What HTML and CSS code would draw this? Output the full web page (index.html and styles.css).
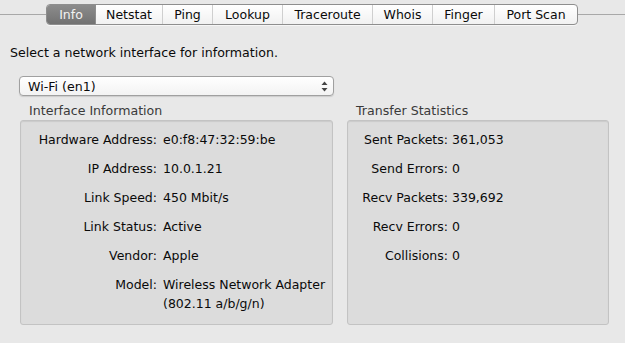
FILE: index.html
```html
<!DOCTYPE html>
<html lang="en">
<head>
    <meta charset="UTF-8">
    <title>Network Utility</title>
    <link rel="stylesheet" href="styles.css">
</head>
<body>
    <div class="tabbar">
        <div class="tabs">
            <span class="tab tab-info active">Info</span>
            <span class="tab tab-netstat">Netstat</span>
            <span class="tab tab-ping">Ping</span>
            <span class="tab tab-lookup">Lookup</span>
            <span class="tab tab-trace">Traceroute</span>
            <span class="tab tab-whois">Whois</span>
            <span class="tab tab-finger">Finger</span>
            <span class="tab tab-port">Port Scan</span>
        </div>
    </div>

    <p class="intro">Select a network interface for information.</p>

    <div class="popup">
        <span>Wi-Fi (en1)</span>
        <svg class="arrows" width="7" height="11" viewBox="0 0 7 11">
            <path d="M3.5 0.5 L6.5 4 L0.5 4 Z" fill="#444"/>
            <path d="M3.5 10.5 L6.5 7 L0.5 7 Z" fill="#444"/>
        </svg>
    </div>

    <div class="panels">
        <section class="group group-left">
            <h2 class="group-title">Interface Information</h2>
            <div class="box">
                <div class="rows">
                    <span class="label">Hardware Address:</span><span>e0:f8:47:32:59:be</span>
                    <span class="label">IP Address:</span><span>10.0.1.21</span>
                    <span class="label">Link Speed:</span><span>450 Mbit/s</span>
                    <span class="label">Link Status:</span><span>Active</span>
                    <span class="label">Vendor:</span><span>Apple</span>
                    <span class="label">Model:</span><span>Wireless Network Adapter<br>(802.11 a/b/g/n)</span>
                </div>
            </div>
        </section>

        <section class="group group-right">
            <h2 class="group-title">Transfer Statistics</h2>
            <div class="box">
                <div class="rows">
                    <span class="label">Sent Packets:</span><span>361,053</span>
                    <span class="label">Send Errors:</span><span>0</span>
                    <span class="label">Recv Packets:</span><span>339,692</span>
                    <span class="label">Recv Errors:</span><span>0</span>
                    <span class="label">Collisions:</span><span>0</span>
                </div>
            </div>
        </section>
    </div>
</body>
</html>
```

FILE: styles.css
```css
body {
    margin: 0;
    background-color: #e8e8e8;
    font-family: 'DejaVu Sans', 'Liberation Sans', sans-serif;
    font-size: 12.5px;
    color: #0a0a0a;
    width: 625px;
    height: 343px;
    overflow: hidden;
}

/* tab strip with the thin line running through it */
.tabbar {
    position: relative;
    height: 21px;
    padding-top: 4px;
    display: flex;
}

.tabbar::before {
    content: "";
    position: absolute;
    left: 0;
    right: 0;
    top: 14px;
    border-top: 1px solid #a8a8a8;
}

.tabs {
    position: relative;
    margin-left: 46px;
    display: flex;
    height: 19px;
    border: 1px solid #8e8e8e;
    border-radius: 4px;
    background: linear-gradient(#ffffff, #f1f1f1);
    overflow: hidden;
    box-shadow: 0 1px 0 rgba(255, 255, 255, 0.6);
}

.tab {
    display: flex;
    align-items: center;
    justify-content: center;
    font-size: 12.5px;
    color: #0a0a0a;
    border-left: 1px solid #cfcfcf;
}

.tab:first-child {
    border-left: none;
}

.tab.active {
    color: #f2f2f2;
    background: linear-gradient(#8c8c8c, #727272);
}

.tab.active + .tab {
    border-left-color: #8e8e8e;
}

.tab-info { width: 48px; }
.tab-netstat { width: 66px; }
.tab-ping { width: 49px; }
.tab-lookup { width: 69px; }
.tab-trace { width: 89px; }
.tab-whois { width: 59px; }
.tab-finger { width: 61px; }
.tab-port { width: 82px; }

.intro {
    margin: 20px 0 0 10px;
    font-size: 12.6px;
    line-height: 16px;
}

/* popup button */
.popup {
    margin: 15px 0 0 19px;
    width: 305px;
    height: 18px;
    border: 1px solid #a0a0a0;
    border-radius: 4px;
    background: linear-gradient(#ffffff, #f3f3f3);
    display: flex;
    align-items: center;
    justify-content: space-between;
    padding-left: 8px;
    font-size: 12.6px;
    box-shadow: 0 1px 1px rgba(0, 0, 0, 0.12);
}

.popup .arrows {
    margin-right: 5px;
}

.panels {
    display: flex;
    gap: 14px;
    margin: 7px 0 0 20px;
}

.group-title {
    margin: 0 0 2px 9px;
    font-size: 12.6px;
    font-weight: normal;
    line-height: 15px;
    color: #3a3a3a;
}

.box {
    box-sizing: border-box;
    height: 205px;
    border: 1px solid #c3c3c3;
    border-radius: 3px;
    background-color: #dcdcdc;
    box-shadow: inset 0 1px 1px rgba(0, 0, 0, 0.08);
    padding-top: 9px;
}

.group-left .box { width: 313px; }
.group-right .box { width: 262px; }

.rows {
    display: grid;
    row-gap: 10px;
    column-gap: 6px;
    line-height: 19px;
}

.group-left .rows { grid-template-columns: 136px 1fr; }
.group-right .rows { grid-template-columns: 100px 1fr; column-gap: 4px; }

.label {
    text-align: right;
}
```
